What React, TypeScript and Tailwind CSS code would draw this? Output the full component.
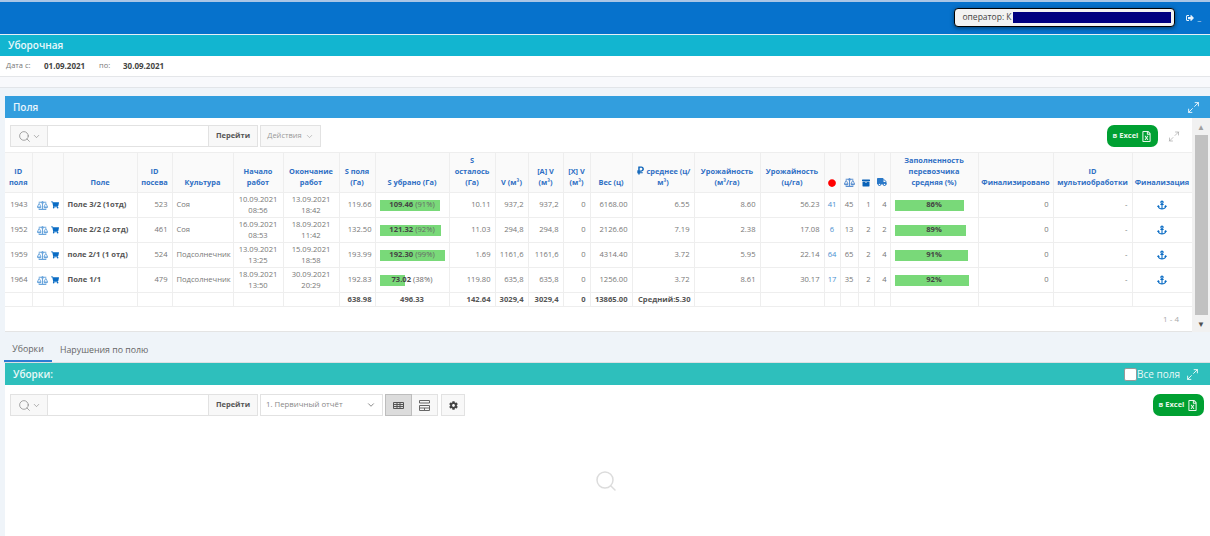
import React from 'react';
import {
  FaAnchor,
  FaArchive,
  FaBalanceScale,
  FaCircle,
  FaCog,
  FaRegFileExcel,
  FaRubleSign,
  FaShoppingCart,
  FaSignOutAlt,
  FaTruck,
} from 'react-icons/fa';
import { ChevronDown, Maximize2, Search } from 'lucide-react';
import { twMerge } from 'tailwind-merge';

interface Row {
  id: number;
  name: string;
  sow: number;
  crop: string;
  start: [string, string];
  end: [string, string];
  area: string;
  done: string;
  donePct: string;
  doneBar: number;
  left: string;
  v: string;
  a: string;
  weight: string;
  density: string;
  yieldV: string;
  yieldC: string;
  red: number;
  scale: number;
  box: number;
  truck: number;
  fill: string;
  fillBar: number;
}

const rows: Row[] = [
  { id: 1943, name: 'Поле 3/2 (1отд)', sow: 523, crop: 'Соя', start: ['10.09.2021', '08:56'], end: ['13.09.2021', '18:42'], area: '119.66', done: '109.46', donePct: '(91%)', doneBar: 60, left: '10.11', v: '937,2', a: '937,2', weight: '6168.00', density: '6.55', yieldV: '8.60', yieldC: '56.23', red: 41, scale: 45, box: 1, truck: 4, fill: '86%', fillBar: 69 },
  { id: 1952, name: 'Поле 2/2 (2 отд)', sow: 461, crop: 'Соя', start: ['16.09.2021', '08:53'], end: ['18.09.2021', '11:42'], area: '132.50', done: '121.32', donePct: '(92%)', doneBar: 61, left: '11.03', v: '294,8', a: '294,8', weight: '2126.60', density: '7.19', yieldV: '2.38', yieldC: '17.08', red: 6, scale: 13, box: 2, truck: 2, fill: '89%', fillBar: 71 },
  { id: 1959, name: 'поле 2/1 (1 отд)', sow: 524, crop: 'Подсолнечник', start: ['13.09.2021', '13:25'], end: ['15.09.2021', '18:58'], area: '193.99', done: '192.30', donePct: '(99%)', doneBar: 65, left: '1.69', v: '1161,6', a: '1161,6', weight: '4314.40', density: '3.72', yieldV: '5.95', yieldC: '22.14', red: 64, scale: 65, box: 2, truck: 4, fill: '91%', fillBar: 73 },
  { id: 1964, name: 'Поле 1/1', sow: 479, crop: 'Подсолнечник', start: ['18.09.2021', '13:50'], end: ['30.09.2021', '20:29'], area: '192.83', done: '73.02', donePct: '(38%)', doneBar: 25, left: '119.80', v: '635,8', a: '635,8', weight: '1256.00', density: '3.72', yieldV: '8.61', yieldC: '30.17', red: 17, scale: 35, box: 2, truck: 4, fill: '92%', fillBar: 74 },
];

const colWidths = [27, 31, 74, 35, 61, 50, 56, 36, 74, 46, 33, 35, 27, 42, 62, 66, 64, 16, 18, 16, 16, 88, 75, 79, 60];

const Th = ({ children, className = '' }: { children?: React.ReactNode; className?: string }) => (
  <th className={twMerge('border-r border-b border-[#eeeeee] px-[2px] pb-[4px] align-bottom text-center text-[7.4px] font-bold leading-[11px] text-[#2f6fc4]', className)}>
    {children}
  </th>
);

const Td = ({ children, className = '' }: { children?: React.ReactNode; className?: string }) => (
  <td className={twMerge('border-r border-b border-[#eeeeee] px-[4px] text-right text-[7.6px] leading-[11.5px] text-[#777777]', className)}>
    {children}
  </td>
);

const Bar = ({ width, children }: { width: number; children: React.ReactNode }) => (
  <div className="relative flex h-[11px] items-center justify-center">
    <div className="absolute top-0 left-0 h-[11px] bg-[#79d979]" style={{ width }} />
    <span className="relative whitespace-nowrap">{children}</span>
  </div>
);

const SearchBox = () => (
  <div className="flex h-[22px] w-[248px] border border-[#e2e2e2]">
    <div className="flex w-[37px] items-center justify-center gap-[1px] border-r border-[#e2e2e2] bg-[#f8f8f8] text-[#777777]">
      <Search size={13} strokeWidth={1.2} />
      <ChevronDown size={9} strokeWidth={1.5} />
    </div>
    <div className="flex-1 bg-white" />
    <div className="flex w-[49px] items-center justify-center border-l border-[#e2e2e2] bg-[#f8f8f8] text-[7.5px] font-bold text-[#555555]">
      Перейти
    </div>
  </div>
);

const ExcelButton = () => (
  <div className="flex h-[22px] w-[51px] items-center justify-center gap-[3px] rounded-[7px] bg-[#00a032] text-[7.5px] font-bold text-[#e6f6ea]">
    в Excel
    <FaRegFileExcel size={11} />
  </div>
);

const App = () => {
  return (
    <div className="flex h-[536px] w-[1210px] flex-col overflow-hidden bg-[#eff4f9] font-['Open_Sans',sans-serif]">
      <div className="h-[2px] bg-[#a9c6e6]" />
      <div className="flex h-[32px] items-start justify-end bg-[#0672cc] pt-[6px] pr-[9px]">
        <div className="flex h-[19px] w-[221px] items-center overflow-hidden rounded-[4px] border border-black bg-[#f2f2f2] pl-[7px] text-[8.5px] text-[#444444] shadow-[0_1px_4px_rgba(0,0,0,0.5)]">
          <span className="whitespace-nowrap">оператор: К</span>
          <div className="ml-[1px] h-[11px] w-[158px] bg-[#000080]" />
        </div>
        <div className="ml-[11px] flex h-[19px] items-center gap-[3px] text-[#e8f2fb]">
          <FaSignOutAlt size={8} />
          <span className="text-[8px] leading-none">_</span>
        </div>
      </div>
      <div className="h-[1px] bg-[#e6eef5]" />
      <div className="flex h-[21px] items-center bg-[#12b5d0] pl-[8px] text-[10px] font-semibold text-[#e9f8fb]">Уборочная</div>
      <div className="flex h-[21px] items-center border-b border-[#e4e6e9] bg-white pb-[1px] pl-[6px] text-[7.5px] text-[#777777]">
        <span className="w-[38px]">Дата с:</span>
        <span className="w-[55px] text-[8px] font-bold text-[#444444]">01.09.2021</span>
        <span className="w-[24px]">по:</span>
        <span className="text-[8px] font-bold text-[#444444]">30.09.2021</span>
      </div>
      <div className="h-[11px] border-b border-[#e2e5e9] bg-[#f8f9fc]" />

      <div className="mt-[8px] ml-[5px] flex h-[236px] w-[1205px] shrink-0 flex-col">
        <div className="flex h-[22px] items-center justify-between bg-[#329ede] pr-[10px] pl-[8px] text-[10px] font-semibold text-[#e9f5fc]">
          Поля
          <Maximize2 size={13} strokeWidth={1.8} />
        </div>
        <div className="flex min-h-0 flex-1">
          <div className="flex w-[1187px] flex-col border-b border-[#e4e4e4] bg-white">
            <div className="flex h-[34px] items-start pt-[7px] pr-[12px] pl-[5px]">
              <SearchBox />
              <div className="ml-[2px] flex h-[22px] w-[61px] items-center justify-center gap-[3px] border border-[#e2e2e2] bg-[#f8f8f8] text-[7.5px] text-[#999999]">
                Действия
                <ChevronDown size={9} strokeWidth={1.5} />
              </div>
              <div className="flex-1" />
              <ExcelButton />
              <div className="ml-[10px] flex h-[22px] w-[12px] items-center text-[#9a9a9a]">
                <Maximize2 size={13} strokeWidth={1.2} />
              </div>
            </div>
            <table className="w-[1187px] table-fixed border-collapse border-t border-[#eeeeee]">
              <colgroup>
                {colWidths.map((w, i) => (
                  <col key={i} style={{ width: w }} />
                ))}
              </colgroup>
              <thead>
                <tr className="h-[40px] bg-[#fafafa]">
                  <Th>ID<br />поля</Th>
                  <Th />
                  <Th>Поле</Th>
                  <Th>ID<br />посева</Th>
                  <Th>Культура</Th>
                  <Th>Начало<br />работ</Th>
                  <Th>Окончание<br />работ</Th>
                  <Th>S поля<br />(Га)</Th>
                  <Th>S убрано (Га)</Th>
                  <Th>S<br />осталось<br />(Га)</Th>
                  <Th>V (м³)</Th>
                  <Th>[A] V<br />(м³)</Th>
                  <Th>[X] V<br />(м³)</Th>
                  <Th>Вес (ц)</Th>
                  <Th className="whitespace-nowrap"><FaRubleSign size={9} className="inline align-[-1px] text-[#0a62b8]" /> среднее (ц/<br />м³)</Th>
                  <Th>Урожайность<br />(м³/га)</Th>
                  <Th>Урожайность<br />(ц/га)</Th>
                  <Th className="px-0"><FaCircle size={8} className="mx-auto mb-[1px] text-[#ff0000]" /></Th>
                  <Th className="px-0"><FaBalanceScale size={11} className="mx-auto text-[#5a8fd0]" /></Th>
                  <Th className="px-0"><FaArchive size={8} className="mx-auto mb-[1px] text-[#0a62b8]" /></Th>
                  <Th className="px-0"><FaTruck size={10} className="mx-auto mb-[1px] text-[#2a78c8]" /></Th>
                  <Th>Заполненность<br />перевозчика<br />средняя (%)</Th>
                  <Th className="whitespace-nowrap px-0">Финализировано</Th>
                  <Th className="whitespace-nowrap px-0">ID<br />мультиобработки</Th>
                  <Th className="whitespace-nowrap px-0">Финализация</Th>
                </tr>
              </thead>
              <tbody>
                {rows.map((r) => (
                  <tr key={r.id} className="h-[25px]">
                    <Td>{r.id}</Td>
                    <Td className="px-0">
                      <div className="flex items-center justify-center gap-[3px]">
                        <FaBalanceScale size={11} className="text-[#6aa5dc]" />
                        <FaShoppingCart size={8} className="text-[#0a6cc4]" />
                      </div>
                    </Td>
                    <Td className="text-left font-bold whitespace-nowrap text-[#555555]">{r.name}</Td>
                    <Td>{r.sow}</Td>
                    <Td className="text-left whitespace-nowrap">{r.crop}</Td>
                    <Td className="px-0 text-center">{r.start[0]}<br />{r.start[1]}</Td>
                    <Td className="px-0 text-center">{r.end[0]}<br />{r.end[1]}</Td>
                    <Td className="pr-[3px]">{r.area}</Td>
                    <Td className="text-center">
                      <Bar width={r.doneBar}>
                        <b className="text-[#444444]">{r.done}</b> <span className="text-[#666666]">{r.donePct}</span>
                      </Bar>
                    </Td>
                    <Td>{r.left}</Td>
                    <Td>{r.v}</Td>
                    <Td>{r.a}</Td>
                    <Td>0</Td>
                    <Td>{r.weight}</Td>
                    <Td>{r.density}</Td>
                    <Td>{r.yieldV}</Td>
                    <Td>{r.yieldC}</Td>
                    <Td className="px-0 text-center text-[#4a8fd0]">{r.red}</Td>
                    <Td className="px-0 text-center">{r.scale}</Td>
                    <Td className="px-[3px]">{r.box}</Td>
                    <Td className="px-[3px]">{r.truck}</Td>
                    <Td className="text-center font-bold text-[#444444]">
                      <Bar width={r.fillBar}>{r.fill}</Bar>
                    </Td>
                    <Td>0</Td>
                    <Td>-</Td>
                    <Td className="px-0"><FaAnchor size={10} className="mx-auto text-[#0a6cc4]" /></Td>
                  </tr>
                ))}
                <tr className="h-[14px]">
                  <Td /><Td /><Td /><Td /><Td /><Td /><Td />
                  <Td className="pr-[3px] font-bold text-[#555555]">638.98</Td>
                  <Td className="text-center font-bold text-[#555555]">496.33</Td>
                  <Td className="font-bold text-[#555555]">142.64</Td>
                  <Td className="font-bold text-[#555555]">3029,4</Td>
                  <Td className="font-bold text-[#555555]">3029,4</Td>
                  <Td className="font-bold text-[#555555]">0</Td>
                  <Td className="font-bold text-[#555555]">13865.00</Td>
                  <Td className="px-[3px] font-bold whitespace-nowrap text-[#555555]">Средний:5.30</Td>
                  <Td /><Td /><Td /><Td /><Td /><Td /><Td /><Td /><Td /><Td />
                </tr>
              </tbody>
            </table>
            <div className="flex flex-1 items-center justify-end pr-[13px] text-[8px] text-[#aaaaaa]">1 - 4</div>
          </div>
          <div className="flex w-[18px] flex-col items-center bg-[#f1f1f1]">
            <div className="flex h-[17px] items-center text-[8px] leading-none text-[#a0a0a0]">▲</div>
            <div className="mx-auto w-[13px] flex-1 bg-[#c1c1c1]" />
            <div className="flex h-[17px] items-center text-[8px] leading-none text-[#505050]">▼</div>
          </div>
        </div>
      </div>

      <div className="mt-[8px] ml-[4px] flex h-[23px] shrink-0 items-stretch border-b border-[#dde0e3] text-[8.8px] text-[#666666]">
        <div className="flex w-[48px] items-center justify-center border-b-2 border-[#2b7bd3]">Уборки</div>
        <div className="ml-[8px] flex items-center">Нарушения по полю</div>
      </div>

      <div className="ml-[5px] flex min-h-0 flex-1 flex-col bg-white">
        <div className="flex h-[22px] shrink-0 items-center justify-between bg-[#2ebfbc] pr-[11px] pl-[8px] text-[10px] font-semibold text-[#e9f9f8]">
          Уборки:
          <div className="flex items-center font-normal">
            <div className="h-[13px] w-[13px] rounded-[2px] border border-[#999999] bg-white" />
            <span className="w-[49px]">Все поля</span>
            <Maximize2 size={13} strokeWidth={1.8} />
          </div>
        </div>
        <div className="flex h-[40px] items-start pt-[9px] pr-[6px] pl-[5px]">
          <SearchBox />
          <div className="ml-[2px] flex h-[22px] w-[123px] items-center justify-between border border-[#e2e2e2] pr-[6px] pl-[5px] text-[7.8px] text-[#888888]">
            1. Первичный отчёт
            <ChevronDown size={10} strokeWidth={1.5} className="text-[#444444]" />
          </div>
          <div className="ml-[2px] flex h-[22px] w-[27px] items-center justify-center border border-[#bdbdbd] bg-[#dcdcdc] text-[#555555]">
            <svg width="11" height="7" viewBox="0 0 11 7" fill="none" stroke="currentColor" strokeWidth="1">
              <path d="M.5.5h10v6H.5zM.5 2.5h10M.5 4.5h10M4 .5v6M7 .5v6" />
            </svg>
          </div>
          <div className="flex h-[22px] w-[26px] items-center justify-center border border-l-0 border-[#e2e2e2] bg-[#f8f8f8] text-[#666666]">
            <svg width="11" height="11" viewBox="0 0 11 11" fill="none" stroke="currentColor" strokeWidth="1">
              <path d="M.5.5h10M.5 3h10M.5 5.5h10M.5 8h10M.5 10.5h10M.5 5.5v5M10.5 5.5v5M5.5 8v2.5M.5.5v2.5M10.5.5v2.5" />
            </svg>
          </div>
          <div className="ml-[3px] flex h-[22px] w-[24px] items-center justify-center border border-[#e2e2e2] bg-[#f8f8f8] text-[#444444]">
            <FaCog size={9} />
          </div>
          <div className="flex-1" />
          <ExcelButton />
        </div>
        <div className="flex justify-center pt-[44px] pr-[3px] text-[#dcdcdc]">
          <Search size={24} strokeWidth={1.5} />
        </div>
      </div>
    </div>
  );
};

export default App;
